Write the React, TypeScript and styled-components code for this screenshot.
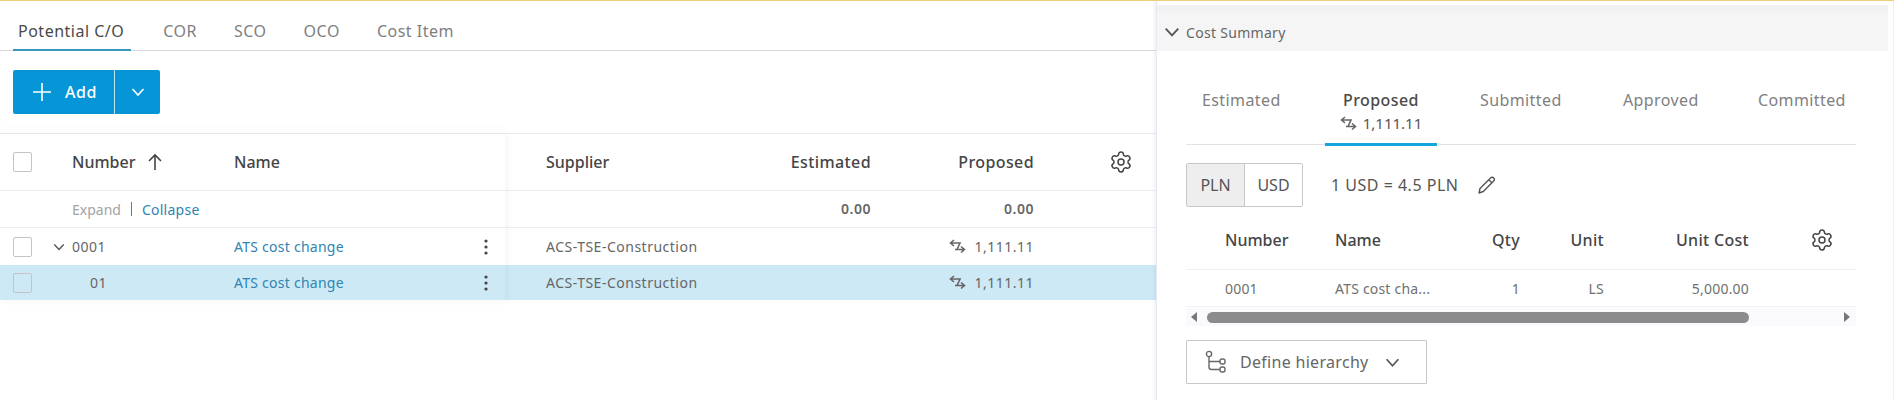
import React from "react";
import styled, { createGlobalStyle } from "styled-components";
import { Settings } from "lucide-react";

const Global = createGlobalStyle`
  html, body { margin: 0; padding: 0; background: #fff; }
  body { font-family: "Noto Sans", "Open Sans", sans-serif; color: #3c3c3c; overflow: hidden; }
  * { box-sizing: border-box; }
`;

const Page = styled.div`
  width: 1894px; height: 400px; display: flex; overflow: hidden;
  border-top: 1px solid #f0cf78; background: #fff;
`;
const Main = styled.main`
  width: 1156px; flex: none; display: flex; flex-direction: column;
`;
const TabBar = styled.div`
  display: flex; height: 50px; margin-bottom: 19px; border-bottom: 1px solid #d9d9d9;
  padding-left: 13px; gap: 27px;
`;
const Tab = styled.div<{ $active?: boolean }>`
  height: 50px; padding: 20px ${p => (p.$active ? "7px" : "5px")} 0 5px; font-size: 16px; line-height: 20px; letter-spacing: .5px;
  color: ${p => (p.$active ? "#4a4a4a" : "#808080")};
  ${p => (p.$active ? "border-bottom: 2px solid #3b98bd;" : "")}
`;
const SplitButton = styled.div`
  display: flex; width: 147px; height: 44px; margin-left: 13px; margin-bottom: 19px;
  background: #0696d7; border-radius: 2px; color: #fff;
`;
const AddPart = styled.div`
  width: 102px; display: flex; align-items: center; padding-left: 19px; gap: 13px;
  border-right: 1px solid #bfe5f5; font-size: 16px; font-weight: 500; letter-spacing: .5px;
`;
const CaretPart = styled.div`
  flex: 1; display: flex; align-items: center; justify-content: center;
`;
const TableWrap = styled.div`
  display: flex; border-top: 1px solid #ebebee; align-items: flex-start;
`;
const FrozenPane = styled.div`
  width: 505px; flex: none; box-shadow: 3px 2px 6px rgba(120,120,160,.05), 0 -6px 8px rgba(120,120,160,.025);
  position: relative; z-index: 1; background: #fff;
`;
const ScrollPane = styled.div`
  flex: 1; min-width: 0;
`;
const FrozenRow = styled.div<{ $h: number; $selected?: boolean; $bottom?: boolean }>`
  height: ${p => p.$h}px; display: grid; grid-template-columns: 72px 162px 1fr 38px;
  align-items: center; background: ${p => (p.$selected ? "#cde9f5" : "#fff")};
  border-bottom: ${p => (p.$bottom ? "1px solid #eeeef2" : "none")};
  position: relative;
`;
const ScrollRow = styled.div<{ $h: number; $selected?: boolean; $bottom?: boolean }>`
  height: ${p => p.$h}px; display: grid; grid-template-columns: 41px 205px 120px 163px 122px;
  align-items: center; background: ${p => (p.$selected ? "#cde9f5" : "#fff")};
  border-bottom: ${p => (p.$bottom ? "1px solid #eeeef2" : "none")};
`;
const Check = styled.div<{ $selected?: boolean }>`
  width: 19px; height: 20px; margin-left: 13px; border: 1px solid #c4c4c6; border-radius: 2px;
  background: ${p => (p.$selected ? "#cde9f5" : "#fff")};
`;
const Head = styled.div<{ $right?: boolean }>`
  font-size: 16px; font-weight: 500; color: #454545; line-height: 22px;
  display: flex; align-items: center; gap: 12px;
  letter-spacing: ${p => (p.$right ? ".4px" : "0")};
  justify-content: ${p => (p.$right ? "flex-end" : "flex-start")};
`;
const Cell = styled.div<{ $right?: boolean; $bold?: boolean; $indent?: number }>`
  font-size: 14px; line-height: 20px; color: #666; letter-spacing: .5px; white-space: nowrap;
  font-weight: ${p => (p.$bold ? 600 : 400)};
  display: flex; align-items: center;
  padding-left: ${p => p.$indent ?? 0}px;
  justify-content: ${p => (p.$right ? "flex-end" : "flex-start")};
`;
const LinkText = styled.span`
  font-size: 14px; letter-spacing: .25px; color: #2f85b3; white-space: nowrap;
`;
const Expander = styled.div`
  font-size: 14px; display: flex; align-items: center; color: #a3a3a3; gap: 10px; white-space: nowrap;
`;
const Sep = styled.span` width: 1px; height: 14px; background: #777; `;
const Tree = styled.span`
  position: absolute; display: inline-flex; left: 53px;
`;
const Dots = styled.div`
  display: flex; justify-content: center; color: #444;
`;
const Side = styled.aside`
  flex: 1; min-width: 0; border-left: 1px solid #e6e8f2; border-right: 1px solid #edf0f6;
  box-shadow: -2px 0 3px rgba(120,120,170,.1); padding-top: 4px; position: relative;
`;
const SideHead = styled.div`
  height: 46px; margin-right: 5px; background: linear-gradient(#f1f2f4 0 7px, #f5f5f5 7px);
  display: flex; align-items: center; padding: 8px 0 0 7px; gap: 6px;
  font-size: 14px; color: #666; letter-spacing: .3px;
`;
const SideBody = styled.div`
  padding: 0 37px 0 29px;
`;
const SideTabs = styled.div`
  display: flex; height: 94px; border-bottom: 1px solid #e3e3e3; padding-left: 16px;
`;
const SideTab = styled.div<{ $active?: boolean; $w: number }>`
  width: ${p => p.$w}px; flex: none; padding-top: 38px; height: 95px; margin-left: ${p => (p.$active ? "-19px" : "0")};
  margin-right: ${p => (p.$active ? "43px" : "0")};
  text-align: ${p => (p.$active ? "center" : "left")};
  font-size: 16px; line-height: 22px; letter-spacing: .4px;
  color: ${p => (p.$active ? "#4a4a4a" : "#808080")}; font-weight: ${p => (p.$active ? 500 : 400)};
  ${p => (p.$active ? "border-bottom: 3px solid #12a5de;" : "")}
`;
const TabValue = styled.div`
  display: flex; justify-content: center; align-items: center; gap: 6px; font-size: 15px; line-height: 24px;
  font-weight: 400; color: #555; letter-spacing: 0;
`;
const RateRow = styled.div`
  display: flex; align-items: center; margin-top: 18px; height: 44px;
`;
const Toggle = styled.div`
  display: flex; width: 117px; height: 44px; border: 1px solid #c8c8c8; border-radius: 2px; font-size: 16px;
`;
const ToggleItem = styled.div<{ $active?: boolean }>`
  flex: 1; display: flex; align-items: center; justify-content: center; color: #555;
  background: ${p => (p.$active ? "#eeeeee" : "#fff")};
  & + & { border-left: 1px solid #c8c8c8; }
`;
const Rate = styled.div`
  margin-left: 28px; font-size: 16px; color: #555; letter-spacing: .5px; margin-right: 19px; white-space: nowrap;
`;
const SubRow = styled.div<{ $h: number }>`
  height: ${p => p.$h}px; display: grid; grid-template-columns: 39px 110px 130px 55px 84px 145px 1fr;
  align-items: center; border-bottom: 1px solid #efeff4;
`;
const SubSpacer = styled.div``;
const SubHead = styled.div<{ $right?: boolean }>`
  font-size: 16px; font-weight: 500; color: #454545; white-space: nowrap; padding-top: 3px;
  letter-spacing: ${p => (p.$right ? ".3px" : "0")};
  text-align: ${p => (p.$right ? "right" : "left")};
`;
const SubGear = styled.div`
  display: flex; padding: 3px 0 0 61px;
`;
const SubCell = styled.div<{ $right?: boolean }>`
  font-size: 14px; color: #707070; white-space: nowrap; letter-spacing: .2px;
  text-align: ${p => (p.$right ? "right" : "left")};
`;
const ScrollTrack = styled.div`
  display: flex; align-items: center; height: 18px; margin-top: 1px; background: #fafafc; padding: 0 6px 0 5px;
`;
const Thumb = styled.div`
  height: 11px; width: 542px; margin: 0 auto 0 10px; border-radius: 6px; background: #8b8b8d;
`;
const Arrow = styled.div<{ $dir: "l" | "r" }>`
  width: 0; height: 0; border-top: 5px solid transparent; border-bottom: 5px solid transparent;
  ${p => (p.$dir === "l" ? "border-right: 6px solid #777;" : "border-left: 6px solid #777;")}
`;
const Define = styled.div`
  width: 241px; height: 44px; margin-top: 14px; border: 1px solid #c8c8c8; border-radius: 1px;
  display: flex; align-items: center; padding-left: 18px; font-size: 16px; color: #666; letter-spacing: .3px;
`;
const DefineLabel = styled.span` margin: 0 16px 0 14px; white-space: nowrap; `;

const Chevron = ({ size = 14, color = "#555", sw = 1.6 }: { size?: number; color?: string; sw?: number }) => (
  <svg width={size} height={size} viewBox="0 0 14 14" fill="none" stroke={color} strokeWidth={sw}>
    <path d="M1.5 4l5.5 6 5.5-6" />
  </svg>
);
const Swap = () => (
  <svg width="17" height="15" viewBox="0 0 17 15" fill="none" stroke="#666" strokeWidth="1.6">
    <path d="M5 1L1.500 4 5 7M1.500 4H11L8 10.500M6 10.500h9.500M12 7.500l3.500 3-3.500 3" />
  </svg>
);
const GearIcon = () => <Settings size={24} color="#444" strokeWidth={1.5} />;
const More = () => (
  <svg width="4" height="16" viewBox="0 0 4 16" fill="#444">
    <circle cx="2" cy="2" r="1.6" /><circle cx="2" cy="8" r="1.6" /><circle cx="2" cy="14" r="1.600" />
  </svg>
);

const Frozen = ({ selected, num, tree }: { selected?: boolean; num: string; tree?: boolean }) => (
  <FrozenRow $h={selected ? 35 : 37} $selected={selected}>
    <Check $selected={selected} />
    <Cell $indent={selected ? 18 : 0}>
      {tree && <Tree><Chevron size={12} /></Tree>}
      {num}
    </Cell>
    <LinkText>ATS cost change</LinkText>
    <Dots><More /></Dots>
  </FrozenRow>
);

export default function App() {
  return (
    <Page>
      <Global />
      <Main>
        <TabBar>
          <Tab $active>Potential C/O</Tab>
          <Tab>COR</Tab>
          <Tab>SCO</Tab>
          <Tab>OCO</Tab>
          <Tab>Cost Item</Tab>
        </TabBar>
        <SplitButton>
          <AddPart>
            <svg width="20" height="20" viewBox="0 0 20 20" stroke="#fff" strokeWidth="1.6"><path d="M10 1v18M1 10h18" /></svg>
            Add
          </AddPart>
          <CaretPart><Chevron size={14} color="#fff" /></CaretPart>
        </SplitButton>
        <TableWrap>
          <FrozenPane>
            <FrozenRow $h={57} $bottom>
              <Check />
              <Head>Number
                <svg width="16" height="18" viewBox="0 0 16 18" fill="none" stroke="#444" strokeWidth="1.6"><path d="M8 17V2M2 8l6-6 6 6" /></svg>
              </Head>
              <Head>Name</Head>
            </FrozenRow>
            <FrozenRow $h={37} $bottom>
              <span />
              <Expander>Expand<Sep /><LinkText>Collapse</LinkText></Expander>
            </FrozenRow>
            <Frozen num="0001" tree />
            <Frozen num="01" selected />
          </FrozenPane>
          <ScrollPane>
            <ScrollRow $h={57} $bottom>
              <span /><Head>Supplier</Head><Head $right>Estimated</Head><Head $right>Proposed</Head>
              <Cell $indent={75}><GearIcon /></Cell>
            </ScrollRow>
            <ScrollRow $h={37} $bottom>
              <span /><span /><Cell $right $bold>0.00</Cell><Cell $right $bold>0.00</Cell>
            </ScrollRow>
            <ScrollRow $h={37}>
              <span /><Cell>ACS-TSE-Construction</Cell><span /><Cell $right><Swap />&nbsp;&nbsp;1,111.11</Cell>
            </ScrollRow>
            <ScrollRow $h={35} $selected>
              <span /><Cell>ACS-TSE-Construction</Cell><span /><Cell $right><Swap />&nbsp;&nbsp;1,111.11</Cell>
            </ScrollRow>
          </ScrollPane>
        </TableWrap>
      </Main>
      <Side>
        <SideHead><Chevron size={16} />Cost Summary</SideHead>
        <SideBody>
          <SideTabs>
            <SideTab $w={142}>Estimated</SideTab>
            <SideTab $w={112} $active>Proposed<TabValue><Swap />1,111.11</TabValue></SideTab>
            <SideTab $w={143}>Submitted</SideTab>
            <SideTab $w={135}>Approved</SideTab>
            <SideTab $w={90}>Committed</SideTab>
          </SideTabs>
          <RateRow>
            <Toggle><ToggleItem $active>PLN</ToggleItem><ToggleItem>USD</ToggleItem></Toggle>
            <Rate>1 USD = 4.5 PLN</Rate>
            <svg width="20" height="20" viewBox="0 0 20 20" fill="none" stroke="#555" strokeWidth="1.4" strokeLinejoin="round">
              <path d="M3 13.5L13.5 3c1-1 2.3-1 3.2 0s.9 2.200 0 3.100L6.300 16.500 2 18zM11.800 4.700l3.500 3.500" />
            </svg>
          </RateRow>
          <SubRow $h={63}>
            <SubSpacer />
            <SubHead>Number</SubHead>
            <SubHead>Name</SubHead>
            <SubHead $right>Qty</SubHead>
            <SubHead $right>Unit</SubHead>
            <SubHead $right>Unit Cost</SubHead>
            <SubGear><GearIcon /></SubGear>
          </SubRow>
          <SubRow $h={37}>
            <SubSpacer />
            <SubCell>0001</SubCell>
            <SubCell>ATS cost cha...</SubCell>
            <SubCell $right>1</SubCell>
            <SubCell $right>LS</SubCell>
            <SubCell $right>5,000.00</SubCell>
          </SubRow>
          <ScrollTrack><Arrow $dir="l" /><Thumb /><Arrow $dir="r" /></ScrollTrack>
          <Define>
            <svg width="21" height="24" viewBox="0 0 21 24" fill="none" stroke="#666" strokeWidth="1.4">
              <circle cx="4" cy="4" r="2.6" /><rect x="15" y="9" width="5" height="5" rx="2" /><rect x="15" y="17" width="5" height="5" rx="2" />
              <path d="M4 6.600V17c0 2 1 2.500 2.500 2.500H15M4 11.500h11" />
            </svg>
            <DefineLabel>Define hierarchy</DefineLabel>
            <Chevron size={15} color="#555" />
          </Define>
        </SideBody>
      </Side>
    </Page>
  );
}
